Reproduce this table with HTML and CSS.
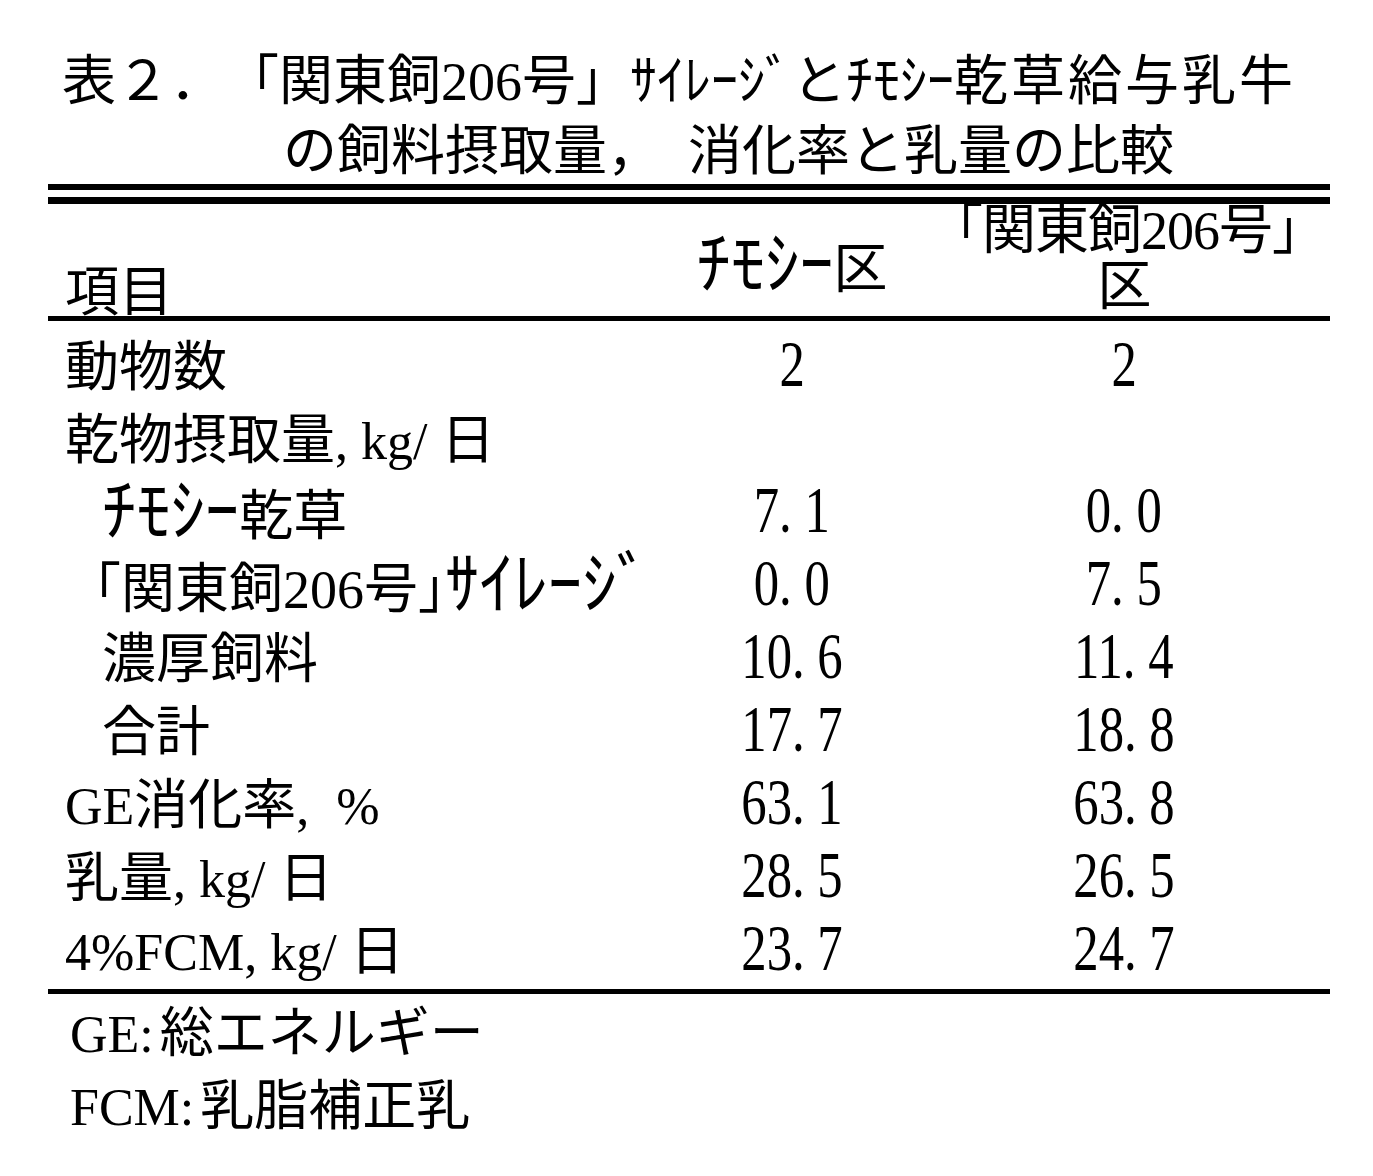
FILE: index.html
```html
<!DOCTYPE html>
<html lang="ja">
<head>
<meta charset="utf-8">
<title>表2 「関東飼206号」サイレージとチモシー乾草給与乳牛の飼料摂取量，消化率と乳量の比較</title>
<link rel="stylesheet" href="styles.css">
</head>
<body>
<div class="page">
  <h1 class="title">
    <span class="title-line first"><span class="t-no">表２．</span>「関東飼206号」ｻｲﾚｰｼﾞとﾁﾓｼｰ<span class="t-wide">乾草給与乳牛</span></span>
    <span class="title-line second">の飼料摂取量，　消化率と乳量の比較</span>
  </h1>

  <div class="table">
    <div class="rule-double"></div>
    <div class="head">
      <div class="h-item">項目</div>
      <div class="h-col h-timothy"><span class="kw">ﾁﾓｼｰ</span>区</div>
      <div class="h-col h-kanto">
        <div class="h-line">｢関東飼206号｣</div>
        <div class="h-line">区</div>
      </div>
    </div>
    <div class="rule"></div>

    <div class="body">
      <div class="row">
        <div class="label">動物数</div>
        <div class="val"><span class="num">2</span></div>
        <div class="val"><span class="num">2</span></div>
      </div>
      <div class="row">
        <div class="label">乾物摂取量<span class="lat">, kg/</span> 日</div>
        <div class="val"></div>
        <div class="val"></div>
      </div>
      <div class="row">
        <div class="label sub"><span class="kw">ﾁﾓｼｰ</span>乾草</div>
        <div class="val"><span class="num">7. 1</span></div>
        <div class="val"><span class="num">0. 0</span></div>
      </div>
      <div class="row">
        <div class="label sub bracket">｢関東飼206号｣<span class="kw">ｻｲﾚｰｼﾞ</span></div>
        <div class="val"><span class="num">0. 0</span></div>
        <div class="val"><span class="num">7. 5</span></div>
      </div>
      <div class="row">
        <div class="label sub">濃厚飼料</div>
        <div class="val"><span class="num">10. 6</span></div>
        <div class="val"><span class="num">11. 4</span></div>
      </div>
      <div class="row">
        <div class="label sub">合計</div>
        <div class="val"><span class="num">17. 7</span></div>
        <div class="val"><span class="num">18. 8</span></div>
      </div>
      <div class="row">
        <div class="label"><span class="lat">GE</span>消化率<span class="lat pct">, %</span></div>
        <div class="val"><span class="num">63. 1</span></div>
        <div class="val"><span class="num">63. 8</span></div>
      </div>
      <div class="row">
        <div class="label">乳量<span class="lat">, kg/</span> 日</div>
        <div class="val"><span class="num">28. 5</span></div>
        <div class="val"><span class="num">26. 5</span></div>
      </div>
      <div class="row">
        <div class="label"><span class="lat">4%FCM, kg/</span> 日</div>
        <div class="val"><span class="num">23. 7</span></div>
        <div class="val"><span class="num">24. 7</span></div>
      </div>
    </div>
    <div class="rule bottom"></div>
  </div>

  <div class="notes">
    <p class="note"><span class="lat">GE:</span>総エネルギー</p>
    <p class="note"><span class="lat">FCM:</span>乳脂補正乳</p>
  </div>
</div>
</body>
</html>
```

FILE: styles.css
```css
html, body {
  margin: 0;
  padding: 0;
  background: #ffffff;
  color: #000000;
}

body {
  font-family: "Liberation Serif", "Noto Sans CJK JP", serif;
  font-size: 54px;
}

.page {
  width: 1282px;
  padding: 47px 0 0 48px;
}

/* ---------- title ---------- */
.title {
  margin: 0 0 -3px;
  font-size: 54px;
  font-weight: normal;
  line-height: 70px;
}

.title-line {
  display: block;
  white-space: nowrap;
}

.title-line.first {
  padding-left: 14px;
}

.t-no {
  margin-right: 28px;
}

.t-wide {
  letter-spacing: 3px;
}

.title-line.second {
  padding-left: 235px;
}

/* ---------- table ---------- */
.table {
  width: 1282px;
}

.rule-double {
  height: 7px;
  border-top: 6px solid #000;
  border-bottom: 7px solid #000;
}

.rule {
  height: 5px;
  background: #000;
}

.head {
  display: grid;
  grid-template-columns: 580px 328px 336px 1fr;
  height: 112px;
  line-height: 54px;
}

.h-item {
  padding: 62px 0 0 17px;
}

.h-col {
  text-align: center;
  white-space: nowrap;
}

.h-timothy {
  padding-top: 27px;
}

.h-kanto {
  padding-top: 0;
  letter-spacing: -1px;
}

.h-line {
  height: 56px;
  line-height: 54px;
}

.body {
  padding: 11px 0 0;
}

.row {
  display: grid;
  grid-template-columns: 580px 328px 336px 1fr;
  height: 73px;
  line-height: 73px;
}

.label {
  padding-left: 17px;
  white-space: nowrap;
}

.label.sub {
  padding-left: 54px;
}

.label.sub.bracket {
  padding-left: 46px;
}

.kw {
  font-size: 1.27em;
  line-height: 1;
}

.lat {
  font-family: "Liberation Serif", serif;
  font-size: 52px;
  line-height: 1;
}

.pct {
  word-spacing: 14px;
}

.val {
  text-align: center;
}

.num {
  display: inline-block;
  font-family: "Liberation Serif", serif;
  font-size: 65px;
  line-height: 1;
  transform: scaleX(0.78);
  vertical-align: 8px;
  white-space: pre;
}

/* ---------- notes ---------- */
.notes {
  padding: 4px 0 0 22px;
}

.note {
  margin: 0;
  height: 73px;
  line-height: 73px;
  white-space: nowrap;
}

.note .lat {
  margin-right: 6px;
}
```
